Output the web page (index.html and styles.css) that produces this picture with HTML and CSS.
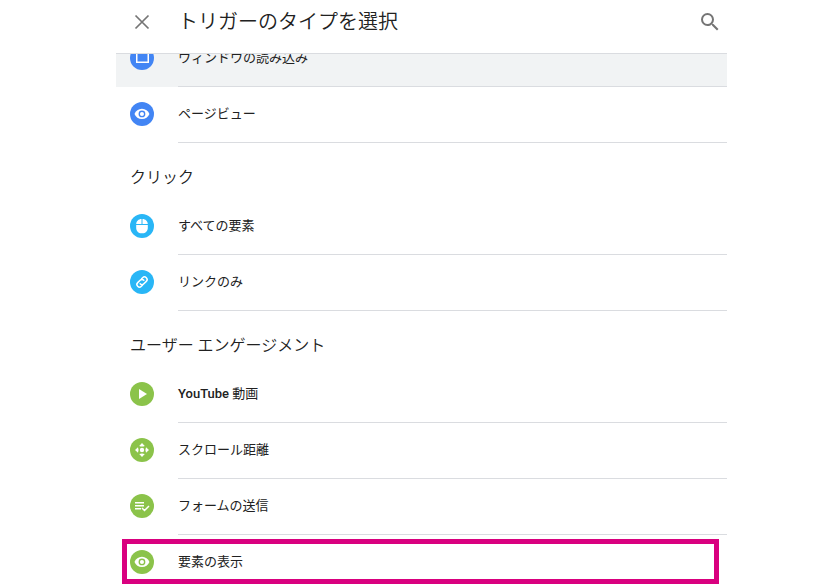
FILE: index.html
```html
<!DOCTYPE html>
<html lang="ja">
<head>
<meta charset="utf-8">
<meta name="viewport" content="width=device-width, initial-scale=1">
<title>トリガーのタイプを選択</title>
<link rel="stylesheet" href="styles.css">
</head>
<body>
<div class="panel">
  <header class="header">
    <button class="icon-button" type="button" aria-label="閉じる">
      <svg viewBox="0 0 24 24"><path d="M5.500 5.500l13 13M18.500 5.500l-13 13" fill="none" stroke="currentColor" stroke-width="1.700"/></svg>
    </button>
    <h1 class="title">トリガーのタイプを選択</h1>
    <button class="icon-button" type="button" aria-label="検索">
      <svg viewBox="0 0 24 24"><path fill="currentColor" d="M15.500 14h-.79l-.28-.27A6.471 6.471 0 0 0 16 9.500 6.500 6.500 0 1 0 9.500 16c1.610 0 3.090-.59 4.230-1.570l.27.28v.79l5 4.990L20.490 19l-4.990-5zm-6 0C7.010 14 5 11.990 5 9.500S7.010 5 9.500 5 14 7.010 14 9.500 11.990 14 9.500 14z"/></svg>
    </button>
  </header>
  <main class="scroller">
    <div class="content">
      <ul class="list">
        <li><button class="row row-hover" type="button">
          <svg class="badge blue" viewBox="0 0 24 24"><circle cx="12" cy="12" r="12"/><path fill="#fff" fill-rule="evenodd" d="M6 6h13v11H6zM7.500 8v7.500h10V8z"/></svg>
          <span class="label">ウィンドウの読み込み</span></button></li>
        <li><button class="row" type="button">
          <svg class="badge blue" viewBox="0 0 24 24"><circle cx="12" cy="12" r="12"/><path d="M12 4.500C7 4.500 2.730 7.610 1 12c1.730 4.390 6 7.500 11 7.500s9.270-3.110 11-7.500c-1.730-4.390-6-7.500-11-7.500zM12 17a5 5 0 1 1 0-10 5 5 0 0 1 0 10zm0-8a3 3 0 1 0 0 6 3 3 0 0 0 0-6z" transform="translate(3.800 3.800) scale(.68)" fill="#fff"/></svg>
          <span class="label">ページビュー</span></button></li>
      </ul>
      <h2 class="section">クリック</h2>
      <ul class="list">
        <li><button class="row" type="button">
          <svg class="badge cyan" viewBox="0 0 24 24"><circle cx="12" cy="12" r="12"/><path fill="#fff" d="M11.500 5v5H6.200C6.300 7 8.500 5.100 11.500 5zM12.500 5c3 .1 5.200 2 5.300 5h-5.300zM6.200 11h11.600v3c0 3-2.300 5.300-5.300 5.300h-1c-3 0-5.300-2.300-5.300-5.300z"/></svg>
          <span class="label">すべての要素</span></button></li>
        <li><button class="row" type="button">
          <svg class="badge cyan" viewBox="0 0 24 24"><circle cx="12" cy="12" r="12"/><g fill="none" stroke="#fff" stroke-width="1.500" stroke-linecap="round" transform="rotate(-45 12 12)"><path d="M10 14.600H8.500a2.600 2.600 0 0 1 0-5.200h3.500a2.600 2.600 0 0 1 2.600 2.600"/><path d="M14 9.400h1.500a2.600 2.600 0 0 1 0 5.200H12A2.600 2.600 0 0 1 9.400 12"/></g></svg>
          <span class="label">リンクのみ</span></button></li>
      </ul>
      <h2 class="section">ユーザー エンゲージメント</h2>
      <ul class="list">
        <li><button class="row" type="button">
          <svg class="badge green" viewBox="0 0 24 24"><circle cx="12" cy="12" r="12"/><path fill="#fff" d="M9 7v10l8-5z"/></svg>
          <span class="label"><span class="latin">YouTube</span> 動画</span></button></li>
        <li><button class="row" type="button">
          <svg class="badge green" viewBox="0 0 24 24"><circle cx="12" cy="12" r="12"/><g fill="#fff"><circle cx="12" cy="12" r="2.200"/><path d="M12 5l2.800 3Q12 9.200 9.200 8zM12 19l2.800-3Q12 14.800 9.200 16zM5 12l3-2.800Q9.200 12 8 14.800zM19 12l-3-2.800Q14.800 12 16 14.800z"/></g></svg>
          <span class="label">スクロール距離</span></button></li>
        <li><button class="row" type="button">
          <svg class="badge green" viewBox="0 0 24 24"><circle cx="12" cy="12" r="12"/><path fill="#fff" d="M5 8h9v1.500H5zM5 11h9v1.500H5zM5 14h6v1.500H5z"/><path fill="none" stroke="#fff" stroke-width="1.500" d="M12 14l2.500 2.500 4.500-4.500"/></svg>
          <span class="label">フォームの送信</span></button></li>
        <li class="marked"><button class="row" type="button">
          <svg class="badge green" viewBox="0 0 24 24"><circle cx="12" cy="12" r="12"/><path d="M12 4.500C7 4.500 2.730 7.610 1 12c1.730 4.390 6 7.500 11 7.500s9.270-3.110 11-7.500c-1.730-4.390-6-7.500-11-7.500zM12 17a5 5 0 1 1 0-10 5 5 0 0 1 0 10zm0-8a3 3 0 1 0 0 6 3 3 0 0 0 0-6z" transform="translate(3.800 3.800) scale(.68)" fill="#fff"/></svg>
          <span class="label">要素の表示</span></button></li>
      </ul>
    </div>
  </main>
</div>
</body>
</html>
```
FILE: styles.css
```css
*,
*::after {
  box-sizing: border-box;
}

body {
  margin: 0;
  overflow: hidden;
  background: #fff;
  color: #212121;
  font-family: Roboto, "Noto Sans CJK JP", sans-serif;
}

.panel {
  display: flex;
  flex-direction: column;
  height: 100vh;
  margin: 0 96px 0 116px;
}

.header {
  display: flex;
  flex: none;
  align-items: center;
  gap: 24px;
  padding: 0 5px 9px 14px;
  height: 54px;
  border-bottom: 1px solid #dadce0;
}

.icon-button {
  flex: none;
  width: 24px;
  height: 24px;
  padding: 0;
  border: 0;
  background: none;
  color: #757575;
}

.icon-button svg {
  display: block;
}

.title {
  flex: 1;
  margin: 0;
  font-size: 20px;
  font-weight: 350;
  line-height: 28px;
}

.scroller {
  flex: 1;
  min-height: 0;
  overflow: hidden;
}

/* The list is scrolled partway through its first row. */
.content {
  margin-top: -23px;
}

.list {
  margin: 0;
  padding: 0;
  list-style: none;
}

.section {
  height: 56px;
  margin: 0;
  padding: 8px 14px 0;
  font-size: 16px;
  font-weight: 350;
  line-height: 54px;
}

.row {
  display: flex;
  align-items: flex-start;
  gap: 24px;
  width: 100%;
  height: 56px;
  padding: 0 0 0 14px;
  border: 0;
  background: none;
  color: inherit;
  font: 400 13px/54px Roboto, "Noto Sans CJK JP", sans-serif;
  text-align: left;
}

.row-hover {
  background: #f1f3f4;
}

.badge {
  flex: none;
  width: 24px;
  height: 24px;
  margin-top: 15px;
}

.blue {
  fill: #4285f4;
}

.cyan {
  fill: #29b6f6;
}

.green {
  fill: #8bc34a;
}

.label {
  flex: 1;
  height: 56px;
  border-bottom: 1px solid #dadce0;
}

.latin {
  font-weight: 500;
}

.marked {
  position: relative;
}

.marked::after {
  content: "";
  position: absolute;
  top: 4px;
  left: 6px;
  right: 8px;
  height: 45px;
  border: 5px solid #d9007f;
  pointer-events: none;
}
```
